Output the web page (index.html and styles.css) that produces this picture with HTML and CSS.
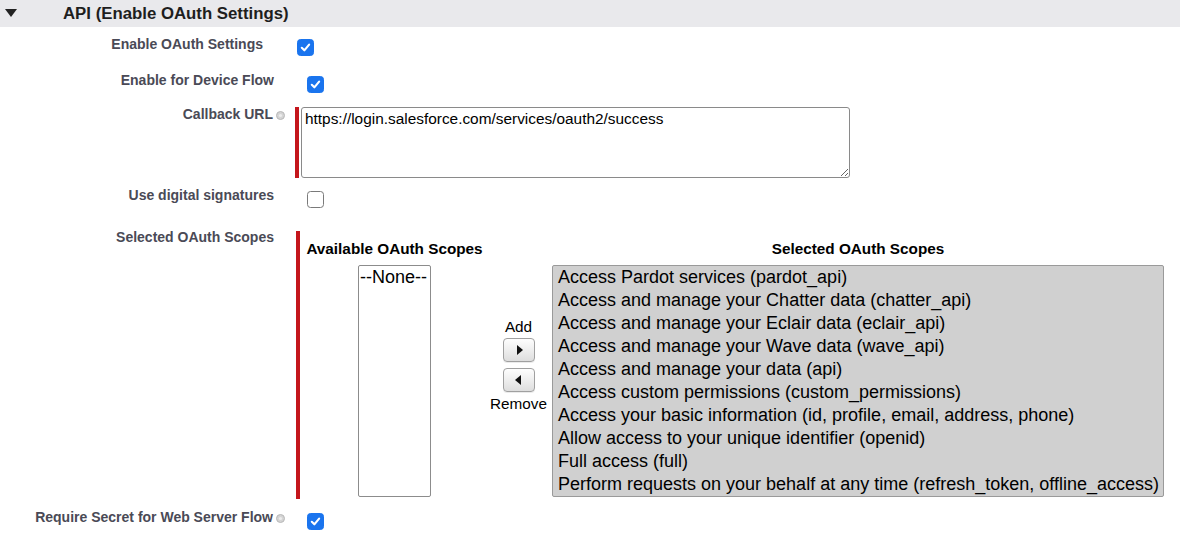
FILE: index.html
```html
<!DOCTYPE html>
<html>
<head>
<meta charset="utf-8">
<link rel="stylesheet" href="styles.css">
</head>
<body>
<div class="section-head">
  <span class="twisty"></span>
  <h2 class="section-title">API (Enable OAuth Settings)</h2>
</div>

<div class="row row-1 row--shift">
  <div class="label">Enable OAuth Settings</div>
  <div class="data"><span class="cb cb--on"><svg viewBox="0 0 17 17"><path d="M4.3 8.9 L7.2 11.7 L12.6 5.3" fill="none" stroke="#fff" stroke-width="2.4" stroke-linecap="round" stroke-linejoin="round"/></svg></span></div>
</div>

<div class="row row-2">
  <div class="label">Enable for Device Flow</div>
  <div class="data"><span class="cb cb--on"><svg viewBox="0 0 17 17"><path d="M4.3 8.9 L7.2 11.7 L12.6 5.3" fill="none" stroke="#fff" stroke-width="2.4" stroke-linecap="round" stroke-linejoin="round"/></svg></span></div>
</div>

<div class="row row-3">
  <div class="label label--help">Callback URL<span class="help"><svg viewBox="0 0 9 9"><circle cx="4.5" cy="4.5" r="4" fill="#d4d4d4" stroke="#b8b8b8" stroke-width="1"/><circle cx="4.5" cy="4.5" r="1.6" fill="#ececec"/></svg></span></div>
  <div class="data data--req">
    <span class="req-bar req-bar--url"></span>
    <textarea class="url" readonly>https://login.salesforce.com/services/oauth2/success</textarea>
  </div>
</div>

<div class="row row-4">
  <div class="label">Use digital signatures</div>
  <div class="data"><span class="cb"></span></div>
</div>

<div class="row row-5">
  <div class="label">Selected OAuth Scopes</div>
  <div class="data data--req">
    <span class="req-bar req-bar--scopes"></span>
    <div class="dual">
      <div class="dual-col dual-col--avail">
        <div class="dual-title">Available OAuth Scopes</div>
        <div class="listbox listbox--avail">
          <div class="opt">--None--</div>
        </div>
      </div>
      <div class="dual-btns">
        <div class="btn-cap">Add</div>
        <span class="arrow-btn"><span class="tri tri--right"></span></span>
        <span class="arrow-btn"><span class="tri tri--left"></span></span>
        <div class="btn-cap">Remove</div>
      </div>
      <div class="dual-col dual-col--sel">
        <div class="dual-title">Selected OAuth Scopes</div>
        <div class="listbox listbox--sel">
          <div class="opt">Access Pardot services (pardot_api)</div>
          <div class="opt">Access and manage your Chatter data (chatter_api)</div>
          <div class="opt">Access and manage your Eclair data (eclair_api)</div>
          <div class="opt">Access and manage your Wave data (wave_api)</div>
          <div class="opt">Access and manage your data (api)</div>
          <div class="opt">Access custom permissions (custom_permissions)</div>
          <div class="opt">Access your basic information (id, profile, email, address, phone)</div>
          <div class="opt">Allow access to your unique identifier (openid)</div>
          <div class="opt">Full access (full)</div>
          <div class="opt">Perform requests on your behalf at any time (refresh_token, offline_access)</div>
        </div>
      </div>
    </div>
  </div>
</div>

<div class="row row-6">
  <div class="label label--help">Require Secret for Web Server Flow<span class="help"><svg viewBox="0 0 9 9"><circle cx="4.5" cy="4.5" r="4" fill="#d4d4d4" stroke="#b8b8b8" stroke-width="1"/><circle cx="4.5" cy="4.5" r="1.6" fill="#ececec"/></svg></span></div>
  <div class="data"><span class="cb cb--on"><svg viewBox="0 0 17 17"><path d="M4.3 8.9 L7.2 11.7 L12.6 5.3" fill="none" stroke="#fff" stroke-width="2.4" stroke-linecap="round" stroke-linejoin="round"/></svg></span></div>
</div>
</body>
</html>
```

FILE: styles.css
```css
* { box-sizing: border-box; }
html, body { margin: 0; padding: 0; background: #fff; }
body {
  font-family: "Liberation Sans", Arial, sans-serif;
  color: #000;
  width: 1180px;
  height: 535px;
  overflow: hidden;
}

.section-head {
  height: 27px;
  background: #e9e9ec;
  display: flex;
  align-items: center;
}
.twisty {
  width: 0; height: 0;
  margin-left: 5px;
  margin-top: -1px;
  border-left: 6px solid transparent;
  border-right: 6px solid transparent;
  border-top: 8px solid #222;
}
.section-title {
  margin: 0 0 0 46px;
  font-size: 16.8px;
  font-weight: bold;
  color: #1e1e1e;
  line-height: 20px;
}

.row { display: flex; }
.label {
  width: 286px;
  flex: none;
  text-align: right;
  padding-right: 12px;
  font-size: 14px;
  line-height: 17px;
  font-weight: bold;
  color: #4a4a56;
}
.label--help { padding-right: 1px; }
.help {
  display: inline-block;
  width: 9px; height: 9px;
  margin-left: 3px;
  vertical-align: -1px;
}
.help svg { display: block; width: 9px; height: 9px; }

.data { padding-left: 21px; }
.data--req { padding-left: 9px; display: flex; }

.cb {
  display: block;
  width: 17px; height: 17px;
  border-radius: 3.5px;
  border: 1px solid #7a7a7a;
  background: #fff;
}
.cb--on { background: #1a74ee; border-color: #1a74ee; }
.cb svg { display: block; width: 15px; height: 15px; }

.row--shift { margin-left: -11px; }
.row-1 { height: 36px; }
.row-1 .label { padding-top: 9px; }
.row-1 .data { padding-top: 12px; padding-left: 22px; }

.row-2 { height: 37px; }
.row-2 .label { padding-top: 9px; }
.row-2 .data { padding-top: 13px; }

.row-3 { height: 78px; }
.row-3 .label { padding-top: 6px; }
.row-3 .data { padding-top: 7px; }

.row-4 { height: 44px; }
.row-4 .label { padding-top: 9px; }
.row-4 .data { padding-top: 13px; }

.row-5 { height: 277px; }
.row-5 .label { padding-top: 7px; }
.row-5 .data { padding-top: 9px; }

.row-6 .label { padding-top: 10px; }
.row-6 .data { padding-top: 14px; }

.req-bar {
  display: block;
  width: 4px;
  background: #c4161c;
  flex: none;
}
.req-bar--url { height: 71px; margin-right: 2px; }
.req-bar--scopes { height: 268px; margin-left: 1px; margin-right: 6px; }

.url {
  display: block;
  width: 549px;
  height: 71px;
  margin: 0;
  padding: 2px 3px;
  border: 1px solid #8a8a8a;
  border-radius: 3px;
  font-family: "Liberation Sans", Arial, sans-serif;
  font-size: 15.4px;
  line-height: 18px;
  color: #000;
  resize: both;
  outline: none;
}

.dual { display: flex; align-items: flex-start; padding-top: 8px; }
.dual-col { display: flex; flex-direction: column; align-items: center; }
.dual-col--avail { width: 177px; }
.dual-col--sel { width: 612px; margin-left: 5px; }
.dual-title {
  font-size: 15.3px;
  font-weight: bold;
  line-height: 18px;
  margin-top: 1px;
  height: 25px;
  white-space: nowrap;
}
.listbox {
  border: 1px solid #8c8c8c;
  border-radius: 2px;
  height: 232px;
  font-size: 18px;
  line-height: 23px;
  overflow: hidden;
  white-space: nowrap;
}
.listbox--avail { width: 73px; background: #fff; padding: 0 1px; }
.listbox--sel { width: 612px; background: #d0d0d0; padding: 0 5px; border-color: #9a9a9a; }

.dual-btns {
  width: 57px;
  margin-left: 7px;
  padding-top: 79px;
  display: flex;
  flex-direction: column;
  align-items: center;
  font-size: 15.3px;
  line-height: 18px;
}
.btn-cap { color: #000; }
.arrow-btn {
  display: flex;
  align-items: center;
  justify-content: center;
  width: 32px;
  height: 24px;
  border: 1px solid #a0a0a0;
  border-radius: 4px;
  background: linear-gradient(#fefefe, #dedede);
  box-shadow: 0 1px 0 rgba(0,0,0,0.08);
  margin-top: 2px;
}
.arrow-btn + .arrow-btn { margin-top: 6px; }
.arrow-btn + .btn-cap { margin-top: 3px; }
.tri { width: 0; height: 0; border-top: 5.5px solid transparent; border-bottom: 5.5px solid transparent; }
.tri--right { border-left: 6px solid #111; margin-left: 2px; }
.tri--left { border-right: 6px solid #111; margin-right: 2px; }
```
